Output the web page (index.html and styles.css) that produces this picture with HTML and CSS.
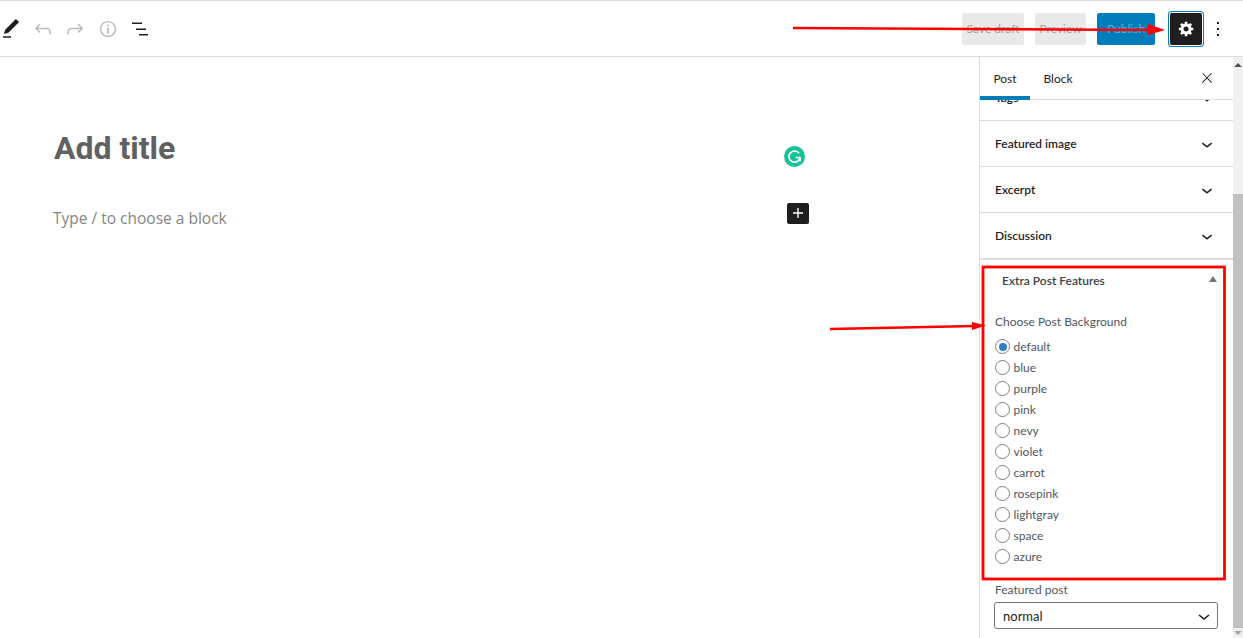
FILE: index.html
```html
<!DOCTYPE html>
<html lang="en">
<head>
  <meta charset="UTF-8" />
  <title>Add title</title>
  <link rel="stylesheet" href="styles.css">
</head>
<body>
  <header class="topbar">
    <div class="tools">
      <svg class="icon tool" viewBox="0 0 24 24"><path d="M20.1 5.1L16.9 2 6.2 12.7l-1.3 4.4 4.5-1.3L20.1 5.1zM4 20.8h8v-1.5H4v1.5z"/></svg>
      <svg class="icon tool off" viewBox="0 0 24 24"><path d="M18.3 11.7c-.6-.6-1.4-.9-2.3-.9H6.7l2.9-3.3-1.1-1-4.5 5L8.5 16l1-1-2.7-2.7H16c.5 0 .9.2 1.3.5 1 1 1 3.4 1 4.5v.3h1.5v-.2c0-1.5 0-4.3-1.5-5.7z"/></svg>
      <svg class="icon tool off" viewBox="0 0 24 24"><path d="M15.6 6.5l-1.1 1 2.9 3.3H8c-.9 0-1.7.3-2.3.9-1.4 1.5-1.4 4.2-1.4 5.6v.2h1.5v-.3c0-1.1 0-3.5 1-4.5.3-.3.7-.5 1.3-.5h9.2L14.5 15l1.1 1.1 4.6-4.6-4.6-5z"/></svg>
      <svg class="icon tool off info" viewBox="-1 -1 26 26"><path d="M12 3.2c-4.8 0-8.8 3.9-8.8 8.8 0 4.8 3.9 8.8 8.8 8.8 4.8 0 8.8-3.9 8.8-8.8 0-4.8-4-8.8-8.8-8.8zm0 16c-4 0-7.2-3.3-7.2-7.2C4.8 8 8 4.8 12 4.8s7.2 3.3 7.2 7.2c0 4-3.2 7.2-7.2 7.2zM11 17h2v-6h-2v6zm0-8h2V7h-2v2z"/></svg>
      <svg class="icon tool" viewBox="0 0 24 24"><path d="M4 5.500h10v1.600H4zM8 11.400h10v1.600H8zM11 17h9v1.600h-9z"/></svg>
    </div>
    <div class="actions">
      <button class="btn">Save draft</button>
      <button class="btn preview">Preview</button>
      <button class="btn publish">Publish</button>
      <button class="gear">
        <svg viewBox="0 0 20 20" width="17" height="17"><path d="M18 12h-2.180c-.17.7-.44 1.350-.81 1.930l1.540 1.540-2.100 2.100-1.540-1.540c-.58.36-1.230.63-1.910.79V19H8v-2.180c-.68-.16-1.330-.43-1.910-.79l-1.540 1.540-2.120-2.120 1.540-1.540c-.36-.58-.63-1.230-.79-1.910H1V9.030h2.170c.16-.7.44-1.350.8-1.940L2.430 5.550l2.100-2.100 1.540 1.540c.58-.37 1.240-.64 1.930-.81V2h3v2.180c.68.16 1.330.43 1.910.79l1.540-1.540 2.120 2.120-1.540 1.540c.36.59.64 1.240.8 1.940H18V12zm-8.500 1.500c1.660 0 3-1.340 3-3s-1.340-3-3-3-3 1.340-3 3 1.340 3 3 3z"/></svg>
      </button>
      <svg class="icon more" viewBox="0 0 24 24"><path d="M13 19h-2v-2h2v2zm0-6h-2v-2h2v2zm0-6h-2V5h2v2z"/></svg>
    </div>
  </header>

  <div class="main">
    <section class="editor">
      <div class="writing">
        <h1 class="title">Add title</h1>
        <div class="grammarly">
          <svg viewBox="0 0 21 21" width="21" height="21"><circle cx="10.500" cy="10.500" r="10.500" fill="#15c39a"/><path d="M15 7.200a5.600 5.600 0 1 0 .8 5.300M11.500 11.500h4.500v4" fill="none" stroke="#fff" stroke-width="1.700"/></svg>
        </div>
      </div>
      <div class="writing block-row">
        <p class="placeholder">Type / to choose a block</p>
        <button class="add">
          <svg viewBox="0 0 24 24" width="20" height="20"><path d="M18 11.200h-5.200V6h-1.600v5.200H6v1.600h5.200V18h1.600v-5.200H18z"/></svg>
        </button>
      </div>
    </section>

    <aside class="sidebar">
      <div class="tabs">
        <span class="tab active">Post</span>
        <span class="tab">Block</span>
        <svg class="icon close" viewBox="0 0 24 24"><path d="M13 11.800l6.100-6.300-1-1-6.100 6.200-6.100-6.300-1 1 6.100 6.300-6.500 6.700 1 1 6.500-6.600 6.500 6.600 1-1z"/></svg>
      </div>
      <div class="sidebar-body">
        <div class="row row-cut">
          <span>Tags</span>
          <svg class="icon chev" viewBox="0 0 24 24"><path d="M17.500 11.600L12 16l-5.500-4.400.9-1.200L12 14l4.500-3.600 1 1.200z"/></svg>
        </div>
        <div class="row">
          <span>Featured image</span>
          <svg class="icon chev" viewBox="0 0 24 24"><path d="M17.500 11.600L12 16l-5.500-4.400.9-1.200L12 14l4.500-3.600 1 1.200z"/></svg>
        </div>
        <div class="row">
          <span>Excerpt</span>
          <svg class="icon chev" viewBox="0 0 24 24"><path d="M17.500 11.600L12 16l-5.500-4.400.9-1.200L12 14l4.500-3.600 1 1.200z"/></svg>
        </div>
        <div class="row">
          <span>Discussion</span>
          <svg class="icon chev" viewBox="0 0 24 24"><path d="M17.500 11.600L12 16l-5.500-4.400.9-1.200L12 14l4.500-3.600 1 1.200z"/></svg>
        </div>

        <div class="metabox">
          <div class="metabox-head">
            <span>Extra Post Features</span>
            <i class="tri"></i>
          </div>
          <div class="field-label">Choose Post Background</div>
          <div class="radios">
            <label class="radio"><input type="radio" name="bg" checked><span>default</span></label>
            <label class="radio"><input type="radio" name="bg"><span>blue</span></label>
            <label class="radio"><input type="radio" name="bg"><span>purple</span></label>
            <label class="radio"><input type="radio" name="bg"><span>pink</span></label>
            <label class="radio"><input type="radio" name="bg"><span>nevy</span></label>
            <label class="radio"><input type="radio" name="bg"><span>violet</span></label>
            <label class="radio"><input type="radio" name="bg"><span>carrot</span></label>
            <label class="radio"><input type="radio" name="bg"><span>rosepink</span></label>
            <label class="radio"><input type="radio" name="bg"><span>lightgray</span></label>
            <label class="radio"><input type="radio" name="bg"><span>space</span></label>
            <label class="radio"><input type="radio" name="bg"><span>azure</span></label>
          </div>
          <div class="featured-label">Featured post</div>
          <div class="select">
            <span>normal</span>
            <svg class="icon" viewBox="0 0 24 24"><path d="M17.500 11.600L12 16l-5.500-4.400.9-1.200L12 14l4.500-3.600 1 1.200z"/></svg>
          </div>
        </div>
      </div>
    </aside>

    <div class="scrollbar">
      <i class="arrow-up"></i>
      <div class="thumb"></div>
      <i class="arrow-down"></i>
    </div>
  </div>

  <!-- red annotations drawn on top of the screenshot -->
  <svg class="notes" viewBox="0 0 1243 638" width="1243" height="638">
    <path d="M793 28 L1150 30" stroke="#f00" stroke-width="2.500" fill="none"/>
    <path d="M1148 24 L1165 30 L1148 35z" fill="#f00"/>
    <path d="M830 329 L975 326" stroke="#f00" stroke-width="2.500" fill="none"/>
    <path d="M972 322 L986 325.500 L972 330z" fill="#f00"/>
    <rect x="983" y="267" width="241.500" height="312" fill="none" stroke="#f00" stroke-width="2.800"/>
  </svg>
</body>
</html>
```

FILE: styles.css
```css
* { margin: 0; padding: 0; box-sizing: border-box; }
body {
  width: 1243px;
  height: 638px;
  overflow: hidden;
  position: relative;
  background: #fff;
  color: #1e1e1e;
  font-family: "Open Sans", "Noto Sans", sans-serif;
  display: flex;
  flex-direction: column;
}
button { font-family: inherit; border: none; }
.icon { width: 24px; height: 24px; fill: #1e1e1e; flex: none; }

/* top toolbar */
.topbar {
  height: 57px;
  flex: none;
  display: flex;
  justify-content: space-between;
  align-items: center;
  border-top: 1px solid #ddd;
  border-bottom: 1px solid #ddd;
  padding-right: 13px;
}
.tools { display: flex; gap: 8px; margin-left: -1px; }
.tool { width: 24px; height: 24px; }
.tool.off { fill: #bbb; }
.tool.info { margin-left: 1px; }
.actions { display: flex; align-items: center; }
.btn {
  height: 32px;
  background: #e9e9e9;
  color: #a3a3a3;
  font-family: Lato, sans-serif;
  font-size: 12px;
  white-space: nowrap;
  border-radius: 2px;
  width: 62px;
  margin-right: 11px;
}
.btn.preview { width: 51px; }
.btn.publish { width: 58px; background: #007cba; color: #66b0d6; margin-right: 15px; }
.gear {
  width: 32px;
  height: 32px;
  background: #1e1e1e;
  border-radius: 2px;
  box-shadow: 0 0 0 1px #fff, 0 0 0 2px #007cba;
  display: flex;
  align-items: center;
  justify-content: center;
  fill: #fff;
  margin-right: 4px;
}
.more { width: 24px; height: 24px; }

/* main area */
.main { flex: 1; display: flex; min-height: 0; }
.editor { flex: 1; padding: 69px 170px 0 54px; }
.writing { display: flex; justify-content: space-between; }
.title {
  font-family: Roboto, sans-serif;
  font-size: 32px;
  line-height: 44px;
  font-weight: 700;
  color: #616161;
}
.grammarly { margin: 20px 4px 0 0; width: 21px; height: 21px; }
.block-row { margin-top: 36px; align-items: center; height: 24px; }
.placeholder { font-size: 15.500px; color: #858585; margin-left: -1px; }
.add {
  width: 22px;
  height: 21px;
  background: #1e1e1e;
  border-radius: 2px;
  fill: #fff;
  display: flex;
  align-items: center;
  justify-content: center;
  margin-top: -10px;
}

/* sidebar */
.sidebar {
  width: 254px;
  flex: none;
  border-left: 1px solid #ddd;
  display: flex;
  flex-direction: column;
  overflow: hidden;
  font-family: Lato, sans-serif;
}
.tabs {
  height: 43px;
  flex: none;
  display: flex;
  align-items: center;
  position: relative;
  z-index: 1;
  background: #fff;
  border-bottom: 1px solid #ddd;
  font-size: 12px;
}
.tab { width: 50px; height: 43px; line-height: 43px; text-align: center; }
.tab + .tab { width: 56px; }
.tab.active { box-shadow: inset 0 -4px 0 #007cba; }
.close { margin-left: auto; margin-right: 18px; width: 16px; height: 16px; }
.sidebar-body { flex: 1; overflow: hidden; }
.row {
  height: 46px;
  display: flex;
  align-items: center;
  justify-content: space-between;
  padding: 0 15px;
  border-bottom: 1px solid #ddd;
  font-size: 12px;
  font-weight: 600;
  color: #1e1e1e;
}
.row-cut { margin-top: -25px; }
.chev { width: 22px; height: 22px; }

/* extra post features */
.metabox { border-top: 1px solid #ddd; font-size: 12px; color: #50575e; }
.metabox-head {
  height: 40px;
  display: flex;
  align-items: center;
  justify-content: space-between;
  padding: 0 16px 0 22px;
  color: #3c434a;
  font-weight: 600;
  font-size: 12px;
}
.tri {
  width: 0;
  height: 0;
  border-left: 4.500px solid transparent;
  border-right: 4.500px solid transparent;
  border-bottom: 6px solid #72777c;
  margin-top: -3px;
}
.field-label { padding-left: 15px; margin-top: 12px; height: 20px; line-height: 20px; }
.radios { display: grid; grid-auto-rows: 21px; padding-left: 15px; margin-top: 4px; }
.radio { display: flex; align-items: center; gap: 3.500px; }
.radio span { margin-top: -1px; }
.radio input {
  appearance: none;
  width: 15px;
  height: 15px;
  border: 1px solid #808080;
  border-radius: 50%;
  background: #fff;
  display: flex;
  align-items: center;
  justify-content: center;
}
.radio input:checked::before {
  content: "";
  width: 8px;
  height: 8px;
  border-radius: 50%;
  background: #2f7fc8;
}
.featured-label { padding-left: 15px; margin-top: 13px; height: 20px; line-height: 20px; }
.select {
  margin: 2px 15px 0 14px;
  height: 27px;
  border: 1px solid #757575;
  border-radius: 3px;
  display: flex;
  align-items: center;
  justify-content: space-between;
  padding: 0 1px 0 8px;
  font-size: 13px;
  color: #1e1e1e;
}

/* scrollbar */
.scrollbar {
  width: 10px;
  flex: none;
  background: #f1f1f1;
  display: flex;
  flex-direction: column;
  align-items: center;
  padding-top: 6px;
}
.arrow-up, .arrow-down {
  width: 0;
  height: 0;
  border-left: 4px solid transparent;
  border-right: 4px solid transparent;
}
.arrow-up { border-bottom: 4px solid #505050; margin-bottom: 127px; }
.arrow-down { border-top: 4px solid #a3a3a3; margin-top: 3px; }
.thumb { width: 100%; height: 434px; background: #c1c1c1; flex: none; }

/* annotations */
.notes { position: absolute; left: 0; top: 0; pointer-events: none; }
```
